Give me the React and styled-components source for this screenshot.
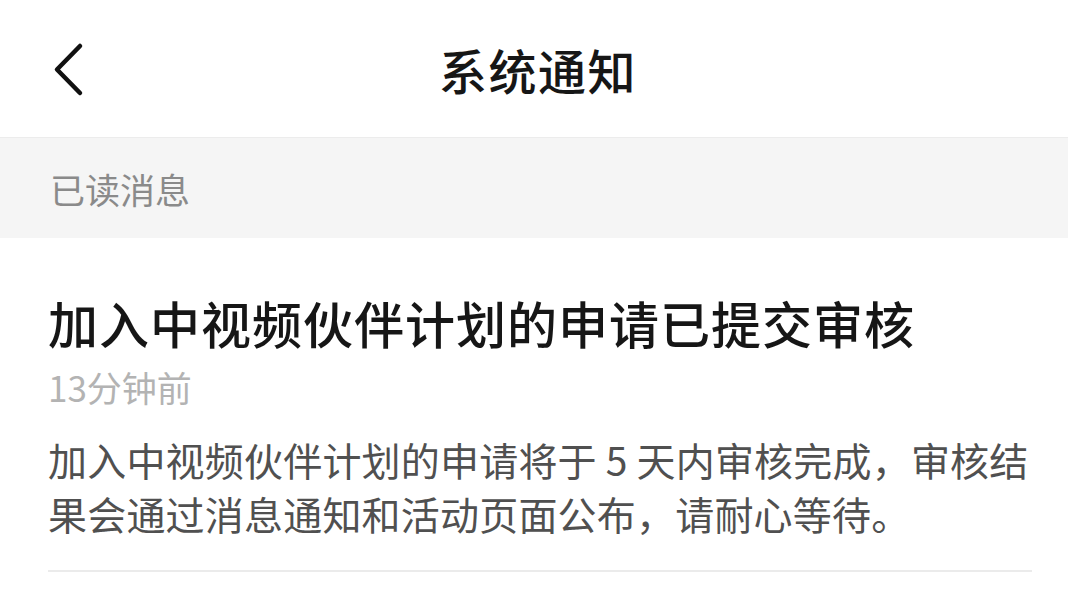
import styled, { createGlobalStyle } from "styled-components";

const GlobalStyle = createGlobalStyle`
  html, body {
    margin: 0;
    padding: 0;
    background: #ffffff;
  }
  body {
    font-family: "Noto Sans CJK SC", "Noto Sans", sans-serif;
  }
  * {
    box-sizing: border-box;
  }
`;

const Page = styled.div`
  width: 1068px;
  height: 606px;
  overflow: hidden;
  background: #ffffff;
`;

const Header = styled.header`
  height: 138px;
  display: grid;
  grid-template-columns: 1fr auto 1fr;
  align-items: center;
  border-bottom: 1px solid #ececec;
`;

const BackButton = styled.button`
  justify-self: start;
  margin-left: 52px;
  margin-top: 2px;
  padding: 0;
  border: none;
  background: none;
  display: flex;
  align-items: center;
  cursor: pointer;
`;

const Title = styled.h1`
  margin: 0 0 0 8px;
  font-size: 48px;
  font-weight: 500;
  color: #161616;
  letter-spacing: 1.5px;
  line-height: 1;
`;

const SectionBar = styled.div`
  height: 100px;
  display: flex;
  align-items: center;
  padding-left: 50px;
  background: #f5f5f5;
  font-size: 35px;
  color: #8a8a8a;
`;

const Item = styled.article`
  margin: 0 36px 0 48px;
  padding: 50px 0 30px;
  border-bottom: 2px solid #ebebeb;
`;

const ItemTitle = styled.h2`
  margin: 0;
  font-size: 50px;
  line-height: 68px;
  font-weight: 500;
  letter-spacing: 1px;
  color: #161616;
`;

const Time = styled.div`
  margin-top: 7px;
  font-size: 35px;
  line-height: 48px;
  color: #b3b3b3;
`;

const Body = styled.p`
  margin: 21px 0 0;
  font-size: 39px;
  line-height: 54px;
  letter-spacing: 0.2px;
  color: #505050;
`;

const ChevronLeft = () => (
  <svg width="34" height="56" viewBox="0 0 34 56" fill="none">
    <polyline
      points="28,4 5,27.5 28,51"
      stroke="#111"
      strokeWidth="4.5"
      strokeLinecap="round"
      strokeLinejoin="round"
    />
  </svg>
);

export default function App() {
  return (
    <Page>
      <GlobalStyle />
      <Header>
        <BackButton aria-label="返回">
          <ChevronLeft />
        </BackButton>
        <Title>系统通知</Title>
        <span />
      </Header>
      <SectionBar>已读消息</SectionBar>
      <Item>
        <ItemTitle>加入中视频伙伴计划的申请已提交审核</ItemTitle>
        <Time>13分钟前</Time>
        <Body>
          加入中视频伙伴计划的申请将于 5 天内审核完成，审核结果会通过消息通知和活动页面公布，请耐心等待。
        </Body>
      </Item>
    </Page>
  );
}
